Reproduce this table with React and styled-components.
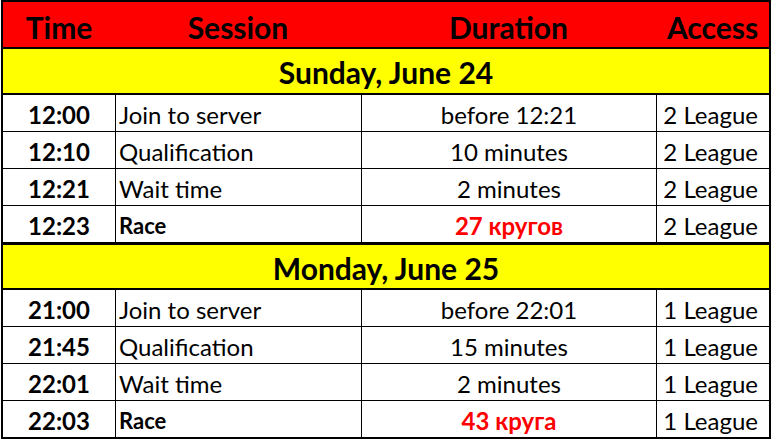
import React from "react";
import styled, { createGlobalStyle } from "styled-components";

const GlobalStyle = createGlobalStyle`
	html, body {
		margin: 0;
		padding: 0;
		background: #ffffff;
	}
	body {
		font-family: Lato, "Noto Sans", "DejaVu Sans", sans-serif;
		color: #000000;
	}
`;

const COLUMNS = "112px 246px 295px 113px";

const Sheet = styled.div`
	width: 766px;
	margin-left: 1px;
	border: 2px solid #000000;
	background: #ffffff;
`;

const HeaderRow = styled.div`
	display: grid;
	grid-template-columns: ${COLUMNS};
	height: 45px;
	background: #ff0000;
	border-bottom: 2px solid #000000;
`;

const HeaderCell = styled.div`
	display: flex;
	align-items: center;
	justify-content: center;
	padding-top: 4px;
	font-size: 30px;
	font-weight: 700;
`;

const DayRow = styled.div`
	display: flex;
	align-items: center;
	justify-content: center;
	height: ${(props) => props.$height || 46}px;
	padding-top: 2px;
	box-sizing: border-box;
	background: #ffff00;
	border-bottom: 2px solid #000000;
	font-size: 30px;
	font-weight: 700;
`;

const Row = styled.div`
	display: grid;
	grid-template-columns: ${COLUMNS};
	height: 36px;
	border-bottom: ${(props) => (props.$edge === "section" ? "3px" : props.$edge === "last" ? "0" : "1px")} solid #000000;
`;

const Cell = styled.div`
	display: flex;
	align-items: center;
	justify-content: ${(props) => props.$align || "center"};
	padding: 2px ${(props) => (props.$align === "flex-end" ? "11px" : "0")} 0 ${(props) => (props.$align === "flex-start" ? "3px" : "0")};
	border-left: ${(props) => (props.$first ? "0" : "1px solid #000000")};
	font-size: ${(props) => (props.$small ? "22px" : "24px")};
	font-weight: ${(props) => (props.$bold ? 700 : 400)};
	color: ${(props) => (props.$red ? "#ff0000" : "#000000")};
	white-space: nowrap;
`;

const days = [
	{
		title: "Sunday, June 24",
		height: 46,
		rows: [
			{ time: "12:00", session: "Join to server", duration: "before 12:21", access: "2 League" },
			{ time: "12:10", session: "Qualification", duration: "10 minutes", access: "2 League" },
			{ time: "12:21", session: "Wait time", duration: "2 minutes", access: "2 League" },
			{ time: "12:23", session: "Race", duration: "27 кругов", access: "2 League", race: true },
		],
	},
	{
		title: "Monday, June 25",
		height: 45,
		rows: [
			{ time: "21:00", session: "Join to server", duration: "before 22:01", access: "1 League" },
			{ time: "21:45", session: "Qualification", duration: "15 minutes", access: "1 League" },
			{ time: "22:01", session: "Wait time", duration: "2 minutes", access: "1 League" },
			{ time: "22:03", session: "Race", duration: "43 круга", access: "1 League", race: true },
		],
	},
];

export default function App() {
	return (
		<>
			<GlobalStyle />
			<Sheet>
				<HeaderRow>
					<HeaderCell>Time</HeaderCell>
					<HeaderCell>Session</HeaderCell>
					<HeaderCell>Duration</HeaderCell>
					<HeaderCell>Access</HeaderCell>
				</HeaderRow>
				{days.map((day, d) => (
					<React.Fragment key={day.title}>
						<DayRow $height={day.height}>{day.title}</DayRow>
						{day.rows.map((row, i) => {
							const lastInDay = i === day.rows.length - 1;
							const edge = lastInDay ? (d === days.length - 1 ? "last" : "section") : "row";
							return (
								<Row key={row.time} $edge={edge}>
									<Cell $first $bold>
										{row.time}
									</Cell>
									<Cell $align="flex-start" $bold={row.race} $small={row.race}>
										{row.session}
									</Cell>
									<Cell $bold={row.race} $red={row.race}>
										{row.duration}
									</Cell>
									<Cell $align="flex-end">{row.access}</Cell>
								</Row>
							);
						})}
					</React.Fragment>
				))}
			</Sheet>
		</>
	);
}
